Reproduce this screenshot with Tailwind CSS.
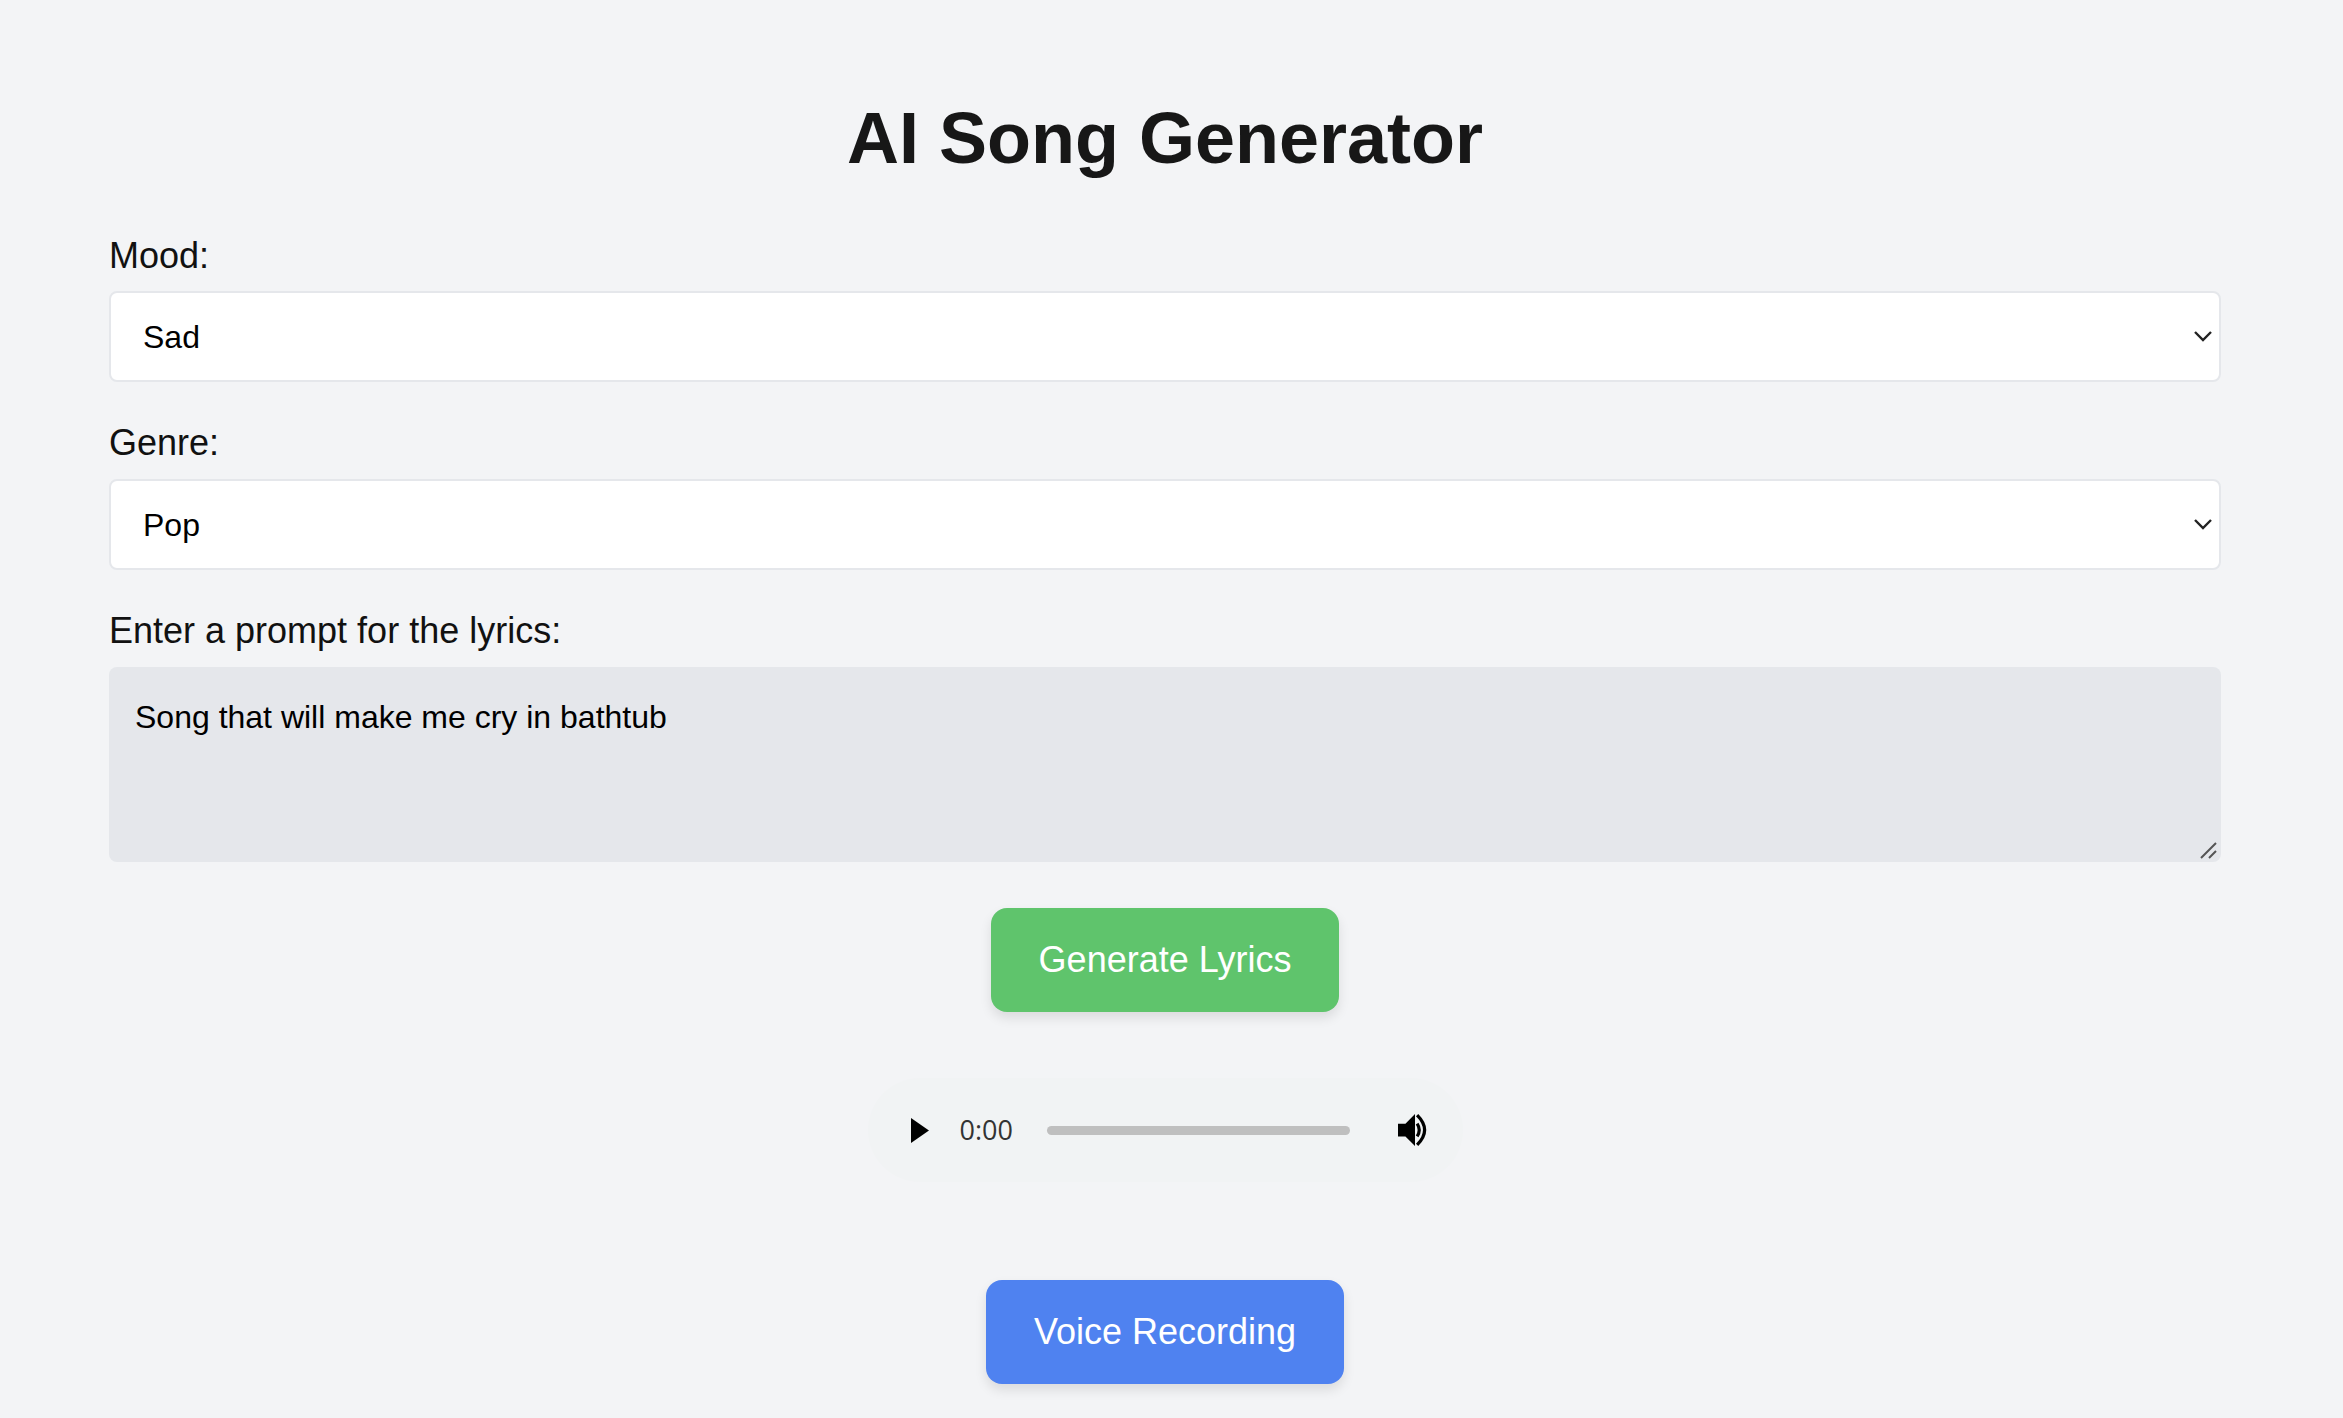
<!DOCTYPE html>
<html lang="en">
<head>
<meta charset="utf-8">
<script src="https://cdn.jsdelivr.net/npm/@tailwindcss/browser@4"></script>
<title>AI Song Generator</title>
</head>
<body class="bg-[#f3f4f6] font-['Liberation_Sans',Arial,sans-serif] text-[#111111] overflow-hidden">
<main class="w-[2343px] h-[1418px] pl-[109px] pr-[122px] pt-[90px]">
  <h1 class="text-center text-[72px] leading-[96px] font-bold text-[#171717] mb-[48px]">AI Song Generator</h1>

  <label class="block text-[36px] leading-[44px] mb-[13px]">Mood:</label>
  <div class="relative mb-[39px]">
    <select class="appearance-none block w-full h-[91px] pl-[32px] bg-white border-2 border-[#e5e7eb] rounded-[8px] text-[32px] text-black">
      <option>Sad</option>
    </select>
    <svg class="absolute right-[9px] top-[38px] w-[18px] h-[14px]" viewBox="0 0 18 14" fill="none" stroke="#222" stroke-width="2.4"><path d="M1 3l8 8 8-8"/></svg>
  </div>

  <label class="block text-[36px] leading-[44px] mb-[14px]">Genre:</label>
  <div class="relative mb-[39px]">
    <select class="appearance-none block w-full h-[91px] pl-[32px] bg-white border-2 border-[#e5e7eb] rounded-[8px] text-[32px] text-black">
      <option>Pop</option>
    </select>
    <svg class="absolute right-[9px] top-[38px] w-[18px] h-[14px]" viewBox="0 0 18 14" fill="none" stroke="#222" stroke-width="2.4"><path d="M1 3l8 8 8-8"/></svg>
  </div>

  <label class="block text-[36px] leading-[44px] mb-[14px]">Enter a prompt for the lyrics:</label>
  <div class="relative mb-[46px]">
    <textarea class="block w-full h-[195px] resize-none bg-[#e5e7eb] rounded-[8px] px-[26px] pt-[30px] pb-[26px] text-[32px] leading-[40px] text-black outline-none">Song that will make me cry in bathtub</textarea>
    <svg class="absolute right-[4px] bottom-[3px] w-[17px] h-[17px]" viewBox="0 0 17 17" fill="none" stroke="#555" stroke-width="2"><path d="M1 16L16 1M9 16l7-7"/></svg>
  </div>

  <div class="flex justify-center">
    <button class="w-[348px] h-[104px] rounded-[16px] bg-[#5fc46c] text-white text-[36px] shadow-[0_6px_12px_rgba(0,0,0,0.1)]">Generate Lyrics</button>
  </div>

  <div class="flex justify-center mt-[66px] mb-[98px]">
    <div class="w-[595px] h-[104px] rounded-[52px] bg-[#f1f3f4] flex items-center pl-[42px] pr-[30px]">
      <svg class="w-[20px] h-[27px] shrink-0" viewBox="0 0 20 27" fill="#000"><path d="M1 1l18 12.500L1 26z"/></svg>
      <span class="ml-[30px] text-[27px] text-[#333] font-['Open_Sans','Noto_Sans',sans-serif] w-[55px]">0:00</span>
      <div class="ml-[32px] w-[303px] h-[9px] rounded-full bg-[#bfbfbf]"></div>
      <svg class="ml-[48px] w-[34px] h-[34px] shrink-0" viewBox="0 0 32 32"><path fill="#000" d="M0 10h7l9-9v30l-9-9H0z"/><path fill="none" stroke="#000" stroke-width="3" d="M18 10q4 6 0 12M18 2q14 14 0 28"/></svg>
    </div>
  </div>

  <div class="flex justify-center">
    <button class="w-[358px] h-[104px] rounded-[16px] bg-[#4f82f0] text-white text-[36px] shadow-[0_6px_12px_rgba(0,0,0,0.1)]">Voice Recording</button>
  </div>
</main>
</body>
</html>
